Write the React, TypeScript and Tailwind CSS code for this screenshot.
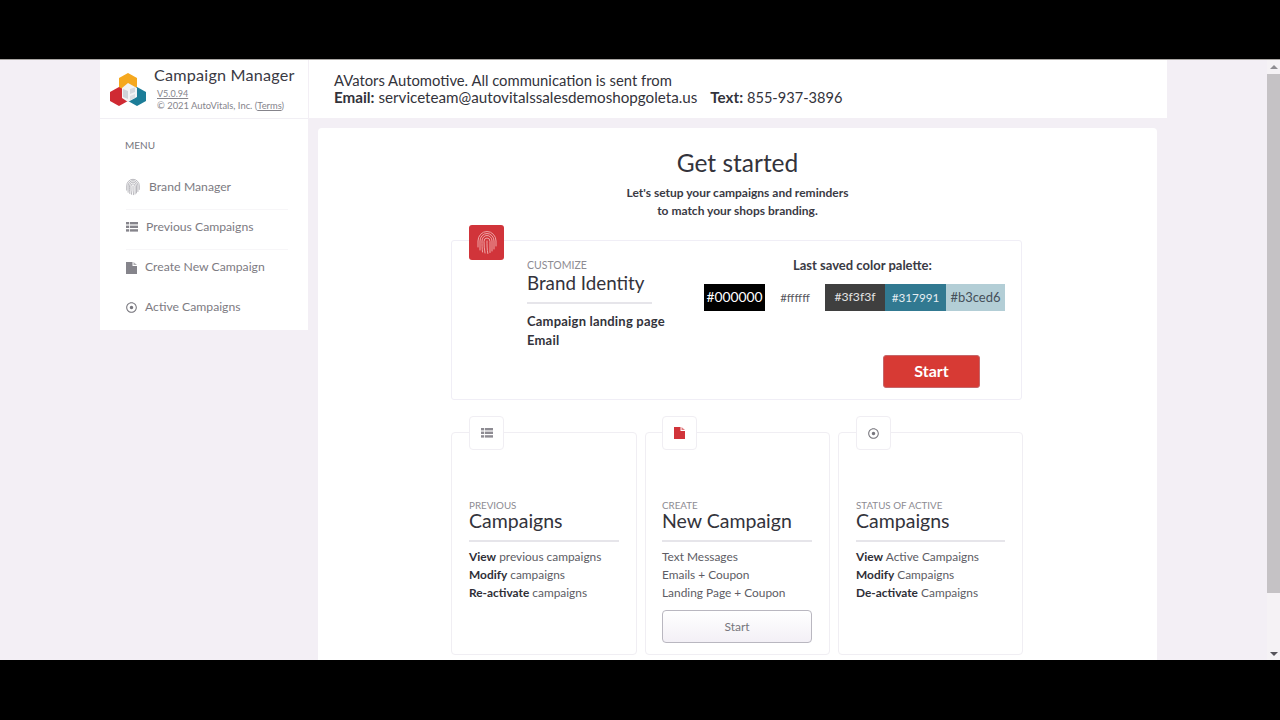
import React from "react";
import { FaRegDotCircle } from "react-icons/fa";

const font = "font-['Lato','Liberation_Sans',sans-serif]";

function Logo() {
  return (
    <svg width="36" height="33" viewBox="0 0 36 33" className="shrink-0">
      <polygon points="18,0 27,5 27,15 18,20 9,15 9,5" fill="#f5a81f" />
      <polygon points="9,14 18,19 18,28 9,33 0,28 0,19" fill="#cf2a33" />
      <polygon points="27,14 36,19 36,28 27,33 18,28 18,19" fill="#1c7d98" />
      <polygon points="18,10 27,15 27,24 18,29 12,25 12,15" fill="#f2f3f5" />
      <polygon points="13,16 18,18 18,26 13,24" fill="#cfd2d8" />
      <polygon points="20,16 25,14.5 25,19 20,21" fill="#d5d8dd" />
      <polygon points="20,23 25,21 25,25 20,27" fill="#dcdfe3" />
    </svg>
  );
}

function Fingerprint({ w, h, color, sw }: { w: number; h: number; color: string; sw: number }) {
  return (
    <svg width={w} height={h} viewBox="0 0 20 23" fill="none" stroke={color} strokeWidth={sw} strokeLinecap="round" className="shrink-0">
      <path d="M1 16 V10 A9 9.5 0 0 1 19 10 V15" />
      <path d="M3 19 V10 A7 7.5 0 0 1 17 10 V18" />
      <path d="M5.5 21 C5 17 5 13 5 10 A5 5.5 0 0 1 15 10 V20" />
      <path d="M8 22 C7.3 18 7 14 7 10.5 A3 3.5 0 0 1 13 10.5 V21.5" />
      <path d="M10 10 C10 14 10 18 10.8 22.5" />
    </svg>
  );
}

function ListIcon({ color }: { color: string }) {
  return (
    <svg width="12" height="10" viewBox="0 0 12 10" fill={color} className="shrink-0">
      <rect x="0" y="0" width="3" height="2.4" />
      <rect x="3.8" y="0" width="8.2" height="2.4" />
      <rect x="0" y="3.6" width="3" height="2.4" />
      <rect x="3.8" y="3.6" width="8.2" height="2.4" />
      <rect x="0" y="7.2" width="3" height="2.4" />
      <rect x="3.8" y="7.2" width="8.2" height="2.4" />
    </svg>
  );
}

function FileIcon({ color }: { color: string }) {
  return (
    <svg width="11" height="12" viewBox="0 0 11 12" className="shrink-0">
      <path d="M0 0 H6.5 V4 H11 V12 H0 Z" fill={color} />
      <path d="M7.5 0 L11 3 H7.5 Z" fill={color} opacity="0.65" />
    </svg>
  );
}

function NavItem({ icon, label, gap, border }: { icon: React.ReactNode; label: string; gap: string; border?: boolean }) {
  return (
    <div className={`h-10 pb-[5px] ml-[26px] mr-[20px] flex items-center ${gap} text-[12.2px] text-[#7d7b82] whitespace-nowrap ${border ? "border-b border-[#f7f6f8]" : ""}`}>
      {icon}
      <span>{label}</span>
    </div>
  );
}

function Swatch({ cls, label }: { cls: string; label: string }) {
  return <div className={`h-[27px] flex items-center justify-center ${cls}`}>{label}</div>;
}

function Card({ w, pl, tile, icon, eyebrow, title, lines, button }: { w: string; pl: string; tile: string; icon: React.ReactNode; eyebrow: string; title: string; lines: React.ReactNode[]; button?: boolean }) {
  return (
    <div className={`relative ${w} h-[223px] border border-[#f0eef3] rounded-[4px] ${pl} pr-[17px] pt-[66px]`}>
      <div className={`absolute ${tile} -top-[17px] w-[35px] h-[34px] bg-white border border-[#f0eef3] rounded-[4px] flex items-center justify-center`}>
        {icon}
      </div>
      <div className="text-[9.8px] leading-[12px] text-[#8d8b92] uppercase">{eyebrow}</div>
      <div className="text-[19.5px] leading-[20px] text-[#33333b] pb-[9px] border-b-2 border-[#e6e5ea] whitespace-nowrap">{title}</div>
      <div className="mt-[6px] text-[11.9px] leading-[18px] text-[#5d5c64] whitespace-nowrap">
        {lines.map((l, i) => (
          <div key={i}>{l}</div>
        ))}
      </div>
      {button && (
        <div className="mt-[8px] h-[33px] border border-[#b9b7c0] rounded-[4px] bg-gradient-to-b from-white to-[#f3f0f6] flex items-center justify-center text-[12px] text-[#77767d]">
          Start
        </div>
      )}
    </div>
  );
}

const B = ({ children }: { children: React.ReactNode }) => <b className="font-bold text-[#2f2f37]">{children}</b>;

export default function App() {
  return (
    <div className={`w-[1280px] h-[720px] flex flex-col bg-black overflow-hidden ${font}`}>
      <div className="h-[59px] shrink-0 bg-black" />
      <div className="h-px shrink-0 bg-[#a9a6a3]" />
      <div className="h-[600px] shrink-0 flex bg-[#f3eff5] overflow-hidden">
        <div className="w-[100px] shrink-0" />
        <div className="w-[209px] shrink-0">
          <aside className="w-[208px] h-[270px] bg-white">
            <div className="h-[59px] flex border-b border-[#f1eff4]">
              <div className="pl-[10px] pt-[13px]">
                <Logo />
              </div>
              <div className="pl-[8px] pt-[6px]">
                <div className="text-[16.2px] leading-[18px] text-[#3a3a44] whitespace-nowrap tracking-[0.2px]">Campaign Manager</div>
                <div className="pl-[3px] text-[9px] leading-[12px] mt-[4px] text-[#85848b] underline">V5.0.94</div>
                <div className="pl-[3px] text-[9.4px] leading-[11px] text-[#85848b] whitespace-nowrap">
                  © 2021 AutoVitals, Inc. (<span className="underline">Terms</span>)
                </div>
              </div>
            </div>
            <div className="pl-[25px] pt-[20px] text-[10px] leading-[12px] text-[#77767d]">MENU</div>
            <div className="mt-[19px]">
              <NavItem icon={<Fingerprint w={14} h={18} color="#a5a4aa" sw={1.1} />} label="Brand Manager" gap="gap-[9px]" border />
              <NavItem icon={<ListIcon color="#85848b" />} label="Previous Campaigns" gap="gap-[8px]" border />
              <NavItem icon={<FileIcon color="#85848b" />} label="Create New Campaign" gap="gap-[8px]" />
              <NavItem icon={<FaRegDotCircle size={11} className="text-[#77767d] shrink-0" />} label="Active Campaigns" gap="gap-[8px]" />
            </div>
          </aside>
        </div>
        <div className="w-[858px] shrink-0 flex flex-col">
          <header className="h-[58px] shrink-0 bg-white pl-[25px] pt-[12px] leading-[17px] text-[#33333b]">
            <div className="text-[14.8px]">AVators Automotive. All communication is sent from</div>
            <div className="whitespace-nowrap text-[15.2px]">
              <b className="font-bold">Email:</b> serviceteam@autovitalssalesdemoshopgoleta.us <b className="font-bold ml-[9px]">Text:</b> <span className="text-[14.6px]">855-937-3896</span>
            </div>
          </header>
          <main className="mt-[10px] ml-[9px] mr-[10px] flex-1 bg-white rounded-t-[4px] pt-[21px]">
            <div className="text-center text-[24.5px] leading-[28px] text-[#33333b]">Get started</div>
            <div className="mt-[7px] text-center text-[12px] leading-[18px] font-bold text-[#3a3a44]">
              Let's setup your campaigns and reminders
              <br />
              to match your shops branding.
            </div>
            <section className="relative mt-[20px] ml-[133px] w-[571px] h-[160px] border border-[#f0eef6] rounded-[3px] flex">
              <div className="absolute left-[17px] -top-[16px] w-[35px] h-[35px] rounded-[3px] bg-[#d1343a] flex items-center justify-center">
                <Fingerprint w={20} h={23} color="#eea6a6" sw={1} />
              </div>
              <div className="pl-[75px] pt-[18px] w-[252px] shrink-0">
                <div className="text-[10.5px] leading-[12px] text-[#8d8b92]">CUSTOMIZE</div>
                <div className="w-[125px] text-[18.8px] leading-[24px] text-[#33333b] pb-[7px] border-b-2 border-[#e6e5ea] whitespace-nowrap">Brand Identity</div>
                <div className="mt-[8px] text-[13px] tracking-[0.2px] leading-[19px] font-bold text-[#33333b] whitespace-nowrap">
                  Campaign landing page
                  <br />
                  Email
                </div>
              </div>
              <div className="flex-1 pt-[16px]">
                <div className="pl-[89px] text-[13px] leading-[16px] font-bold text-[#3a3a44] whitespace-nowrap">Last saved color palette:</div>
                <div className="mt-[11px] flex">
                  <Swatch cls="w-[61px] bg-black text-white text-[13.8px]" label="#000000" />
                  <Swatch cls="w-[60px] bg-white text-[#55555c] text-[11.5px]" label="#ffffff" />
                  <Swatch cls="w-[60px] bg-[#3f3f3f] text-[#e4e4e4] text-[12.2px]" label="#3f3f3f" />
                  <Swatch cls="w-[61px] bg-[#317991] text-[#e6eef2] text-[11.7px]" label="#317991" />
                  <Swatch cls="w-[59px] bg-[#b3ced6] text-[#45505a] text-[13px]" label="#b3ced6" />
                </div>
                <div className="mt-[44px] ml-[179px] w-[97px] h-[33px] pb-[2px] rounded-[3px] border border-[#c5676a] bg-[#d73a34] flex items-center justify-center text-[16px] font-bold text-white">
                  Start
                </div>
              </div>
            </section>
            <div className="mt-[32px] ml-[133px] flex gap-[8px]">
              <Card
                w="w-[186px]"
                pl="pl-[17px]"
                tile="left-[17px]"
                icon={<ListIcon color="#8d8b92" />}
                eyebrow="Previous"
                title="Campaigns"
                lines={[
                  <><B>View</B> previous campaigns</>,
                  <><B>Modify</B> campaigns</>,
                  <><B>Re-activate</B> campaigns</>,
                ]}
              />
              <Card
                w="w-[185px]"
                pl="pl-[16px]"
                tile="left-[16px]"
                icon={<FileIcon color="#d1343a" />}
                eyebrow="Create"
                title="New Campaign"
                lines={["Text Messages", "Emails + Coupon", "Landing Page + Coupon"]}
                button
              />
              <Card
                w="w-[185px]"
                pl="pl-[17px]"
                tile="left-[17px]"
                icon={<FaRegDotCircle size={11} className="text-[#77767d]" />}
                eyebrow="Status of Active"
                title="Campaigns"
                lines={[
                  <><B>View</B> Active Campaigns</>,
                  <><B>Modify</B> Campaigns</>,
                  <><B>De-activate</B> Campaigns</>,
                ]}
              />
            </div>
          </main>
        </div>
        <div className="flex-1" />
        <div className="w-[13px] shrink-0 bg-[#f5f2f5] flex flex-col items-center">
          <div className="h-[14px] shrink-0 flex items-center justify-center">
            <div className="w-0 h-0 border-l-[4px] border-r-[4px] border-b-[4px] border-l-transparent border-r-transparent border-b-[#8f8d92]" />
          </div>
          <div className="w-full h-[519px] shrink-0 bg-[#c5c2c5]" />
          <div className="flex-1" />
          <div className="h-[13px] shrink-0 flex items-center justify-center">
            <div className="w-0 h-0 border-l-[4px] border-r-[4px] border-t-[4px] border-l-transparent border-r-transparent border-t-[#55535a]" />
          </div>
        </div>
      </div>
      <div className="h-[60px] shrink-0 bg-black" />
    </div>
  );
}
